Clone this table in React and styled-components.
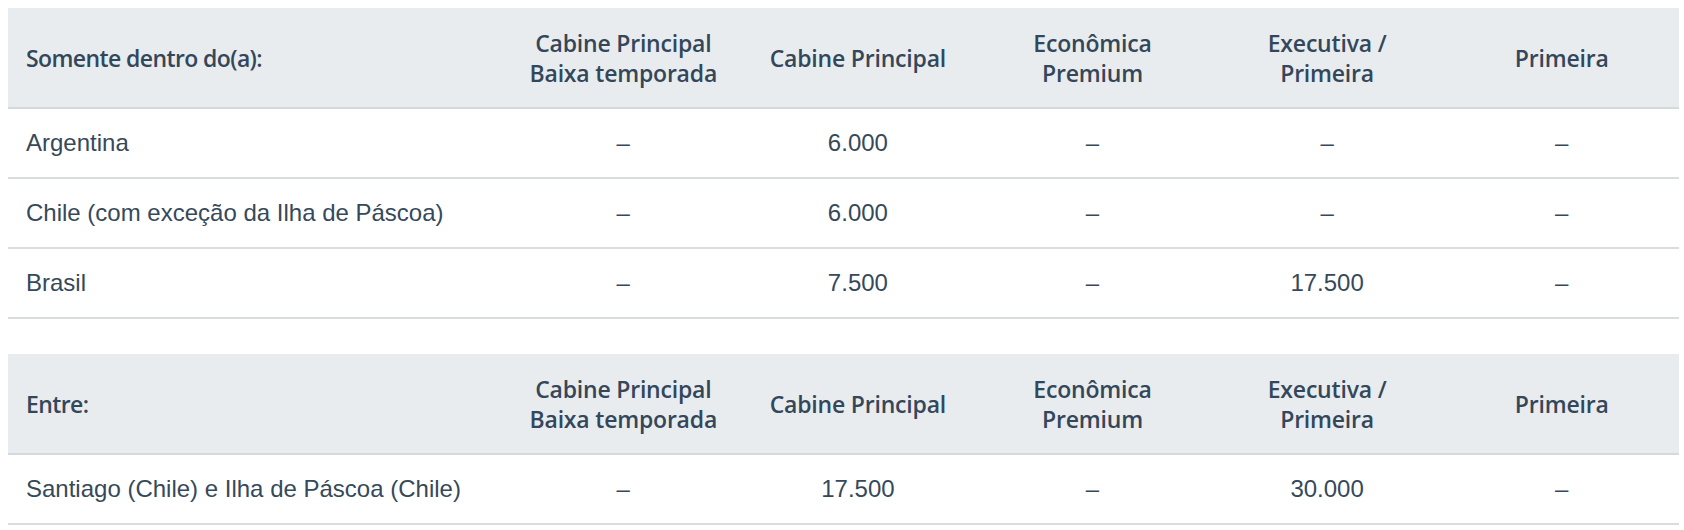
import React from "react";
import styled, { createGlobalStyle } from "styled-components";

const GlobalStyle = createGlobalStyle`
  body {
    margin: 8px 5px 8px 8px;
    background: #ffffff;
    font-family: "Liberation Sans", Arial, sans-serif;
    color: #36495a;
  }
`;

const Page = styled.div`
  display: flex;
  flex-direction: column;
  gap: 35px;
`;

const Table = styled.table`
  width: 100%;
  border-collapse: collapse;
  table-layout: fixed;
`;

const HeadCell = styled.th`
  box-sizing: border-box;
  height: 100px;
  padding: 0 18px;
  background: #e9ecee;
  border-bottom: 2px solid #d4d9dc;
  font-family: "Open Sans", "Noto Sans", sans-serif;
  font-weight: 600;
  font-size: 23px;
  line-height: 30px;
  letter-spacing: ${({ $first }) => ($first ? "-0.6px" : "-0.2px")};
  color: #34475a;
  text-align: ${({ $first }) => ($first ? "left" : "center")};
  width: ${({ $first }) => ($first ? "498px" : "auto")};
  vertical-align: middle;
`;

const Cell = styled.td`
  height: 68px;
  padding: 0 18px;
  border-bottom: 2px solid #d9dddf;
  font-size: 24px;
  color: #36495a;
  text-align: ${({ $first }) => ($first ? "left" : "center")};
  vertical-align: middle;
`;

const columns = [
  ["Cabine Principal", "Baixa temporada"],
  ["Cabine Principal"],
  ["Econômica", "Premium"],
  ["Executiva /", "Primeira"],
  ["Primeira"],
];

const sections = [
  {
    title: "Somente dentro do(a):",
    rows: [
      ["Argentina", "–", "6.000", "–", "–", "–"],
      ["Chile (com exceção da Ilha de Páscoa)", "–", "6.000", "–", "–", "–"],
      ["Brasil", "–", "7.500", "–", "17.500", "–"],
    ],
  },
  {
    title: "Entre:",
    rows: [
      [
        "Santiago (Chile) e Ilha de Páscoa (Chile)",
        "–",
        "17.500",
        "–",
        "30.000",
        "–",
      ],
    ],
  },
];

const AwardTable = ({ title, rows }) => (
  <Table>
    <thead>
      <tr>
        <HeadCell $first>{title}</HeadCell>
        {columns.map((lines, i) => (
          <HeadCell key={i}>
            {lines.map((l, j) => (
              <React.Fragment key={j}>
                {j > 0 && <br />}
                {l}
              </React.Fragment>
            ))}
          </HeadCell>
        ))}
      </tr>
    </thead>
    <tbody>
      {rows.map((row, r) => (
        <tr key={r}>
          {row.map((v, c) => (
            <Cell key={c} $first={c === 0}>
              {v}
            </Cell>
          ))}
        </tr>
      ))}
    </tbody>
  </Table>
);

export default function App() {
  return (
    <>
      <GlobalStyle />
      <Page>
        {sections.map((s, i) => (
          <AwardTable key={i} title={s.title} rows={s.rows} />
        ))}
      </Page>
    </>
  );
}
